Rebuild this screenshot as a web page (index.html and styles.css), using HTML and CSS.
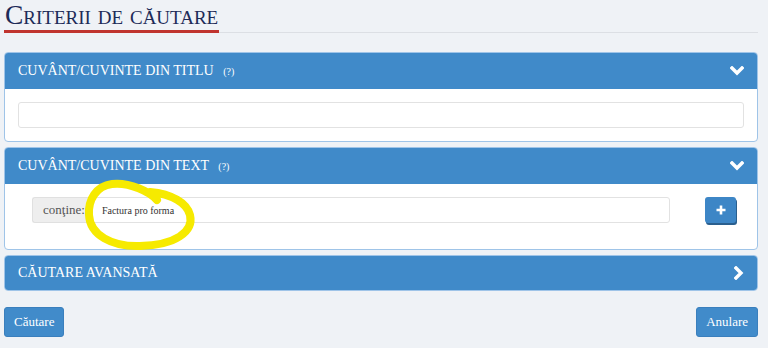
FILE: index.html
```html
<!DOCTYPE html>
<html lang="ro">
<head>
  <meta charset="UTF-8">
  <meta name="viewport" content="width=device-width, initial-scale=1.0">
  <title>Criterii de căutare</title>
  <link rel="stylesheet" href="styles.css">
</head>
<body>
  <div class="page">
    <div class="title-bar">
      <h1>Criterii de căutare</h1>
    </div>

    <div class="panel">
      <div class="panel-heading">
        <span class="panel-title">Cuvânt/cuvinte din titlu <small>(?)</small></span>
        <svg class="chevron" width="14" height="10" viewBox="0 0 14 10"><polyline points="2,2 7,7 12,2" fill="none" stroke="#fff" stroke-width="3.4" stroke-linecap="square"/></svg>
      </div>
      <div class="panel-body">
        <input type="text" class="form-control">
      </div>
    </div>

    <div class="panel panel-text">
      <div class="panel-heading">
        <span class="panel-title">Cuvânt/cuvinte din text <small>(?)</small></span>
        <svg class="chevron" width="14" height="10" viewBox="0 0 14 10"><polyline points="2,2 7,7 12,2" fill="none" stroke="#fff" stroke-width="3.4" stroke-linecap="square"/></svg>
      </div>
      <div class="panel-body row-body">
        <div class="input-group">
          <span class="addon">conţine:</span>
          <input type="text" class="form-control" value="Factura pro forma">
        </div>
        <button class="btn btn-plus" type="button">
          <svg width="12" height="12" viewBox="0 0 12 12"><path d="M6 1.5v9M1.5 6h9" stroke="#fff" stroke-width="2.6"/></svg>
        </button>
      </div>
      <!-- hand-drawn highlight -->
      <svg class="mark" width="130" height="75" viewBox="0 0 130 75">
        <path d="M78 22 C71 14, 51 4, 33 6 C17 8, 9 22, 10 37 C11 57, 33 69, 61 68 C96 67, 115 54, 111 37 C108 25, 93 16, 71 14" fill="none" stroke="#f6ea00" stroke-width="8" stroke-linecap="round"/>
      </svg>
    </div>

    <div class="panel panel-collapsed">
      <div class="panel-heading">
        <span class="panel-title">Căutare avansată</span>
        <svg class="chevron" width="10" height="14" viewBox="0 0 10 14"><polyline points="2,2 7,7 2,12" fill="none" stroke="#fff" stroke-width="3.4" stroke-linecap="square"/></svg>
      </div>
    </div>

    <div class="actions">
      <button class="btn btn-primary" type="button">Căutare</button>
      <button class="btn btn-primary" type="button">Anulare</button>
    </div>
  </div>
</body>
</html>
```

FILE: styles.css
```css
body {
  margin: 0;
  background-color: #eff2f6;
  font-family: "Liberation Serif", "Times New Roman", serif;
  color: #333;
}

.page {
  width: 754px;
  padding: 0 10px 0 4px;
}

.title-bar {
  height: 32px;
  border-bottom: 1px solid #dcdfe4;
  margin-bottom: 19px;
}

h1 {
  display: inline-block;
  margin: 0;
  padding: 0 1px;
  font-size: 27.5px;
  font-weight: normal;
  font-variant: small-caps;
  line-height: 30px;
  color: #1d2b58;
  border-bottom: 3px solid #c0342f;
}

.panel {
  position: relative;
  background-color: white;
  border: 1px solid #9fc4e8;
  border-radius: 4px;
  margin-bottom: 5px;
}

.panel-heading {
  display: flex;
  align-items: center;
  justify-content: space-between;
  height: 36px;
  padding: 0 13px;
  background-color: #408ac9;
  border-radius: 3px 3px 0 0;
}

.panel-collapsed .panel-heading {
  height: 34px;
  border-radius: 3px;
}

.panel-title {
  color: white;
  font-size: 14px;
  text-transform: uppercase;
}

.panel-title small {
  font-size: 10px;
  margin-left: 6px;
}

.chevron {
  display: block;
}

.panel-body {
  padding: 13px;
}

.form-control {
  display: block;
  width: 100%;
  height: 26px;
  box-sizing: border-box;
  border: 1px solid #e2e2e2;
  border-radius: 3px;
  padding: 0 9px;
  font-family: "Liberation Serif", "Times New Roman", serif;
  font-size: 10px;
  color: #333;
  background-color: white;
}

.row-body {
  display: flex;
  align-items: flex-start;
  padding: 13px 21px 26px 27px;
}

.input-group {
  display: flex;
  width: 638px;
}

.addon {
  display: flex;
  align-items: center;
  padding: 0 7px 0 10px;
  height: 26px;
  box-sizing: border-box;
  background-color: #eeeeee;
  border: 1px solid #e0e0e0;
  border-right: none;
  border-radius: 3px 0 0 3px;
  font-size: 13px;
  color: #555;
  white-space: nowrap;
}

.input-group .form-control {
  border-radius: 0 3px 3px 0;
}

.btn {
  border: none;
  border-radius: 3px;
  cursor: pointer;
  font-family: "Liberation Serif", "Times New Roman", serif;
}

.btn-plus {
  display: flex;
  align-items: center;
  justify-content: center;
  width: 31px;
  height: 26px;
  margin-left: auto;
  background-color: #3d86c6;
  box-shadow: 1px 2px 0 #2a5f8e;
  padding: 0;
}

.mark {
  position: absolute;
  left: 74px;
  top: 30px;
}

.actions {
  display: flex;
  justify-content: space-between;
  margin-top: 16px;
}

.btn-primary {
  height: 30px;
  padding: 0 9px;
  background-color: #418bca;
  color: white;
  font-size: 13px;
  border: 1px solid #3a7fbd;
}
```
